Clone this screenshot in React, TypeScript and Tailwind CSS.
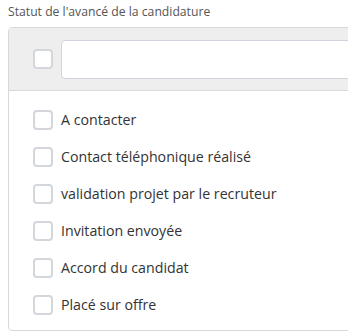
import React from 'react';

const statuses = [
  'A contacter',
  'Contact téléphonique réalisé',
  'validation projet par le recruteur',
  'Invitation envoyée',
  'Accord du candidat',
  'Placé sur offre',
];

const Box: React.FC = () => (
  <span className="block w-5 h-5 shrink-0 rounded-[4px] border-2 border-[#d3d6da] bg-white" />
);

const App: React.FC = () => {
  return (
    <div
      className="w-[348px] h-[333px] overflow-hidden bg-white"
      style={{ fontFamily: '"Open Sans", "Noto Sans", sans-serif' }}
    >
      <div className="pl-2 pt-[3px] h-[27px] text-[12.2px] leading-[18px] text-[#555]">
        Statut de l'avancé de la candidature
      </div>
      <div className="ml-2 w-[360px] border border-[#d9d9d9] rounded-[4px]">
        <div className="h-[63px] bg-[#eeeeee] border-b border-[#d9d9d9] flex items-center pl-6 gap-2">
          <Box />
          <input
            className="flex-1 h-[39px] bg-white border border-[#d0d4dc] rounded-[4px] outline-none"
            type="text"
          />
        </div>
        <ul className="pt-[10px] pb-[7px]">
          {statuses.map((s) => (
            <li key={s} className="h-[37px] flex items-center pl-6 gap-2">
              <Box />
              <span className="text-[14.2px] text-[#333]">{s}</span>
            </li>
          ))}
        </ul>
      </div>
    </div>
  );
};

export default App;
